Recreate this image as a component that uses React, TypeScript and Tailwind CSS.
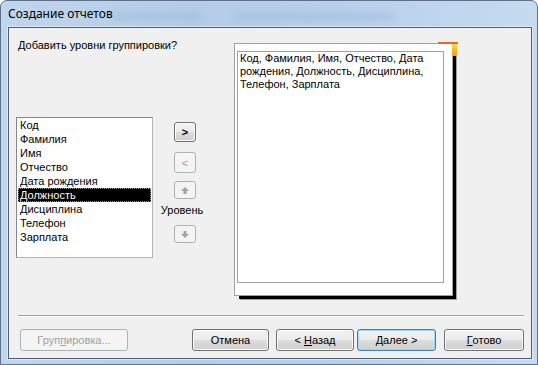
const ui = "font-['Liberation_Sans',Arial,sans-serif] text-[11px] leading-[14px] text-black";

const fields = ["Код", "Фамилия", "Имя", "Отчество", "Дата рождения", "Должность", "Дисциплина", "Телефон", "Зарплата"];

const btnBase = "flex items-center justify-center rounded-[3px] border text-[11px]";
const btnNormal = "border-[#707070] bg-[linear-gradient(#f2f2f2_0%,#ebebeb_50%,#dddddd_50%,#cfcfcf_100%)] shadow-[inset_0_0_0_1px_#fbfbfb]";
const btnDefault = "border-[#3c7fb1] bg-[linear-gradient(#f2f2f2_0%,#ebebeb_50%,#dddddd_50%,#cfcfcf_100%)] shadow-[inset_0_0_0_1px_#9ed6f5]";
const btnDisabled = "border-[#adb2b5] bg-[#f4f4f4] text-[#a0a0a0]";

function Arrow({ down }: { down?: boolean }) {
  return (
    <svg width="8" height="7" viewBox="0 0 8 7" className={down ? "rotate-180" : ""}>
      <polygon points="4,0 8,4 5.5,4 5.5,7 2.5,7 2.5,4 0,4" fill="#a3a3a3" />
    </svg>
  );
}

export default function App() {
  return (
    <div className={`${ui} relative flex h-[365px] w-[538px] flex-col overflow-hidden rounded-t-[7px] border border-[#5f7088] bg-[linear-gradient(90deg,#c0d6ec,#b3cce8_35%,#b8d0eb_65%,#c6dbf0)]`}>
      {/* title bar */}
      <div className="relative flex h-[26px] shrink-0 items-center pl-[7px] font-['Noto_Sans',sans-serif] text-[12px] leading-none text-black">
        <span className="absolute left-[113px] top-[12px] h-[7px] w-[87px] rounded-full bg-[#8aa6c6]/30 blur-[3px]" />
        <span className="absolute left-[233px] top-[12px] h-[7px] w-[160px] rounded-full bg-[#8aa6c6]/30 blur-[3px]" />
        <span className="relative">Создание отчетов</span>
      </div>

      {/* client area */}
      <div className="ml-[7px] flex h-[332px] w-[524px] shrink-0 flex-col border border-[#4e5f74] bg-[#f0f0f0] shadow-[0_0_0_1px_rgba(255,255,255,0.45)]">
        <div className="flex h-[287px] shrink-0">
          {/* left column */}
          <div className="flex w-[225px] flex-col pl-[7px]">
            <div className="ml-[2px] mt-[10px]">Добавить уровни группировки?</div>
            <div className="mt-[65px] flex items-start">
              <div className="h-[141px] w-[137px] border border-[#828790] border-r-[#b5b5b5] border-b-[#b5b5b5] bg-white px-[1px]">
                {fields.map((f) =>
                  f === "Должность" ? (
                    <div key={f} className="h-[14px] bg-black pl-[2px] text-white outline-1 -outline-offset-1 outline-dotted outline-[#9a9a9a]">
                      {f}
                    </div>
                  ) : (
                    <div key={f} className="h-[14px] pl-[2px]">
                      {f}
                    </div>
                  )
                )}
              </div>
              <div className="ml-[21px] mt-[5px] flex w-[22px] flex-col items-center">
                <div className={`${btnBase} ${btnNormal} h-[20px] w-[22px] font-bold`}>&gt;</div>
                <div className={`${btnBase} ${btnDisabled} mt-[10px] h-[21px] w-[22px]`}>&lt;</div>
                <div className={`${btnBase} ${btnDisabled} mt-[8px] h-[18px] w-[22px]`}>
                  <Arrow />
                </div>
                <div className="mr-[6px] mt-[4px] whitespace-nowrap">Уровень</div>
                <div className={`${btnBase} ${btnDisabled} mt-[8px] h-[18px] w-[22px]`}>
                  <Arrow down />
                </div>
              </div>
            </div>
          </div>

          {/* right panel */}
          <div className="relative mt-[15px] h-[253px] w-[219px] border border-[#a0a0a0] bg-white shadow-[4px_4px_0_-1px_#000,5px_5px_0_-1px_#a0a0a0]">
            <span className="absolute -top-[2px] left-[203px] h-[2px] w-[20px] bg-[#f0641e]" />
            <span className="absolute -right-[5px] top-0 h-[12px] w-[5px] bg-[linear-gradient(#ffd83a,#f89a1c)]" />
            <div className="ml-[2px] mt-[7px] h-[232px] w-[207px] border border-[#a0a0a0] pl-[2px] text-[11px] leading-[13px]">
              Код, Фамилия, Имя, Отчество, Дата
              <br />
              рождения, Должность, Дисциплина,
              <br />
              Телефон, Зарплата
            </div>
          </div>
        </div>

        {/* separator */}
        <div className="ml-[9px] mr-[7px] border-t border-b border-t-[#a0a0a0] border-b-white" />

        {/* bottom buttons */}
        <div className="mt-[12px] flex pl-[11px] pr-[7px]">
          <div className={`${btnBase} ${btnDisabled} h-[22px] w-[108px]`}>
            Груп<u>п</u>ировка...
          </div>
          <div className={`${btnBase} ${btnNormal} ml-auto h-[22px] w-[77px]`}>Отмена</div>
          <div className={`${btnBase} ${btnNormal} ml-[7px] h-[22px] w-[78px]`}>
            &lt; <u className="ml-[3px]">Н</u>азад
          </div>
          <div className={`${btnBase} ${btnDefault} ml-[3px] h-[22px] w-[79px]`}>
            <u>Д</u>алее &gt;
          </div>
          <div className={`${btnBase} ${btnNormal} ml-[8px] h-[22px] w-[80px]`}>
            <u>Г</u>отово
          </div>
        </div>
      </div>
    </div>
  );
}
